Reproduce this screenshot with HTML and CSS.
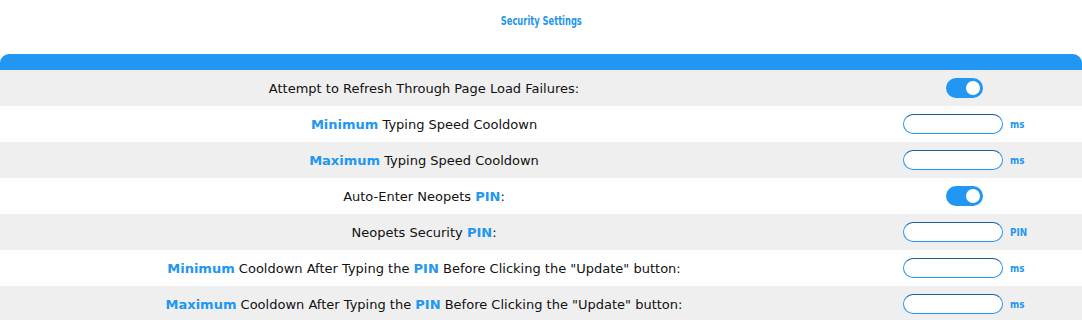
FILE: index.html
```html
<!DOCTYPE html>
<html>
<head>
    <title>Security Settings</title>
    <link rel="stylesheet" href="styles.css">
</head>
<body>
    <h1 class="title"><span>Security Settings</span></h1>

    <div class="panel">
        <div class="panel-head"></div>

        <div class="row">
            <div class="label">Attempt to Refresh Through Page Load Failures:</div>
            <div class="value"><span class="switch"><span class="knob"></span></span></div>
        </div>
        <div class="row">
            <div class="label"><b class="hl">Minimum</b> Typing Speed Cooldown</div>
            <div class="value"><input class="field" type="text"><span class="unit">ms</span></div>
        </div>
        <div class="row">
            <div class="label"><b class="hl">Maximum</b> Typing Speed Cooldown</div>
            <div class="value"><input class="field" type="text"><span class="unit">ms</span></div>
        </div>
        <div class="row">
            <div class="label">Auto-Enter Neopets <b class="hl">PIN</b>:</div>
            <div class="value"><span class="switch"><span class="knob"></span></span></div>
        </div>
        <div class="row">
            <div class="label">Neopets Security <b class="hl">PIN</b>:</div>
            <div class="value"><input class="field" type="text"><span class="unit">PIN</span></div>
        </div>
        <div class="row">
            <div class="label"><b class="hl">Minimum</b> Cooldown After Typing the <b class="hl">PIN</b> Before Clicking the "Update" button:</div>
            <div class="value"><input class="field" type="text"><span class="unit">ms</span></div>
        </div>
        <div class="row">
            <div class="label"><b class="hl">Maximum</b> Cooldown After Typing the <b class="hl">PIN</b> Before Clicking the "Update" button:</div>
            <div class="value"><input class="field" type="text"><span class="unit">ms</span></div>
        </div>
    </div>
</body>
</html>
```

FILE: styles.css
```css
body { margin: 0; font-family: "DejaVu Sans", sans-serif; font-size: 13px; color: #111; background: #fff; }
.title { margin: 0; padding: 13px 0 0; height: 54px; box-sizing: border-box; text-align: center; font-family: "DejaVu Sans", sans-serif; font-size: 13px; font-weight: bold; color: #2196f3; }
.title span { display: inline-block; transform: scaleX(0.64); }
.panel { overflow: hidden; }
.panel-head { height: 16px; background: #2196f3; border-radius: 9px 9px 0 0; }
.row { display: grid; grid-template-columns: 848px 1fr; align-items: center; height: 36px; }
.row:nth-child(even) { background: #efefef; }
.label { text-align: center; }
.hl { color: #2196f3; font-weight: bold; }
.value { display: flex; align-items: center; justify-content: center; gap: 7px; padding-left: 12px; }
.switch { position: relative; display: inline-block; width: 37px; height: 20px; border-radius: 10px; background: #2196f3; margin-right: 13px; }
.knob { position: absolute; right: 3px; top: 3px; width: 14px; height: 14px; border-radius: 50%; background: #fff; }
.field { width: 100px; height: 20px; box-sizing: border-box; border: 1px solid #2196f3; border-top-color: #1d5f9e; border-radius: 10px; outline: none; background: #fff; margin: 0; }
.unit { width: 30px; font-size: 11px; font-weight: bold; color: #2196f3; }
.unit { display: inline-block; transform: scaleX(0.8); transform-origin: left center; }
```
